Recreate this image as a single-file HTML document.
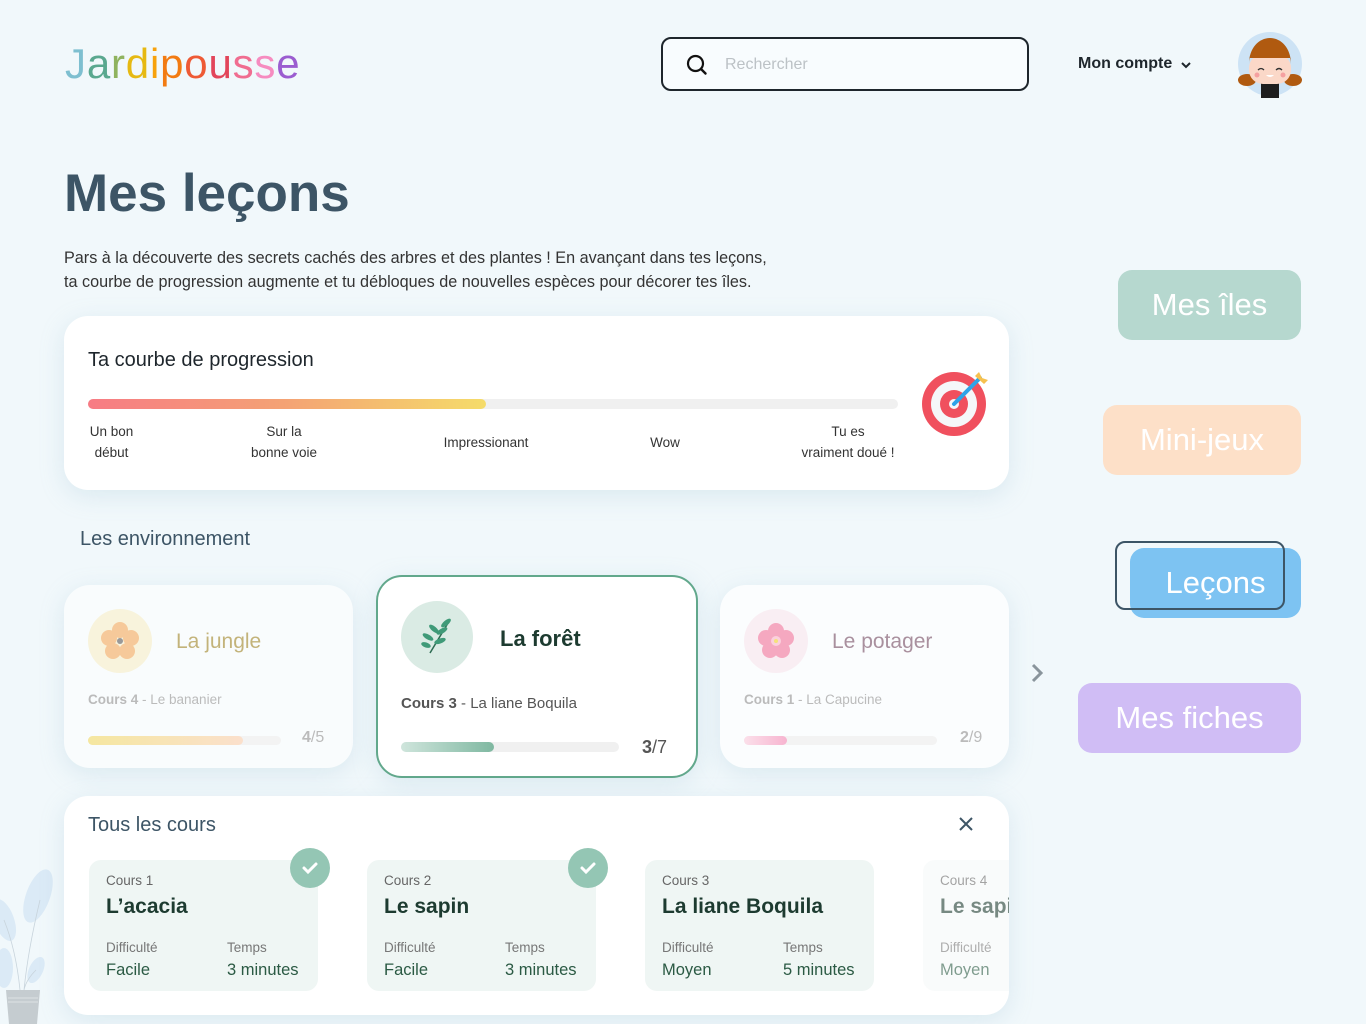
<!DOCTYPE html>
<html><head><meta charset="utf-8"><style>
*{box-sizing:border-box;margin:0;padding:0}
body{width:1366px;height:1024px;overflow:hidden;background:#f1f8fb;font-family:"Liberation Sans",sans-serif;position:relative;color:#2a3640}
.abs{position:absolute}
.logo{left:65px;top:40px;font-size:42px;font-weight:400;letter-spacing:0.8px}
.search{left:661px;top:37px;width:368px;height:54px;border:2px solid #1e262c;border-radius:10px;background:#f8fcfe}
.search span{position:absolute;left:62px;top:17px;font-size:16px;color:#bcc2c6}
.card{background:#fff;border-radius:24px;box-shadow:0 6px 24px rgba(150,190,210,0.25)}
.nav{color:#fff;font-size:31px;border-radius:14px;text-align:center;line-height:70px;height:70px}
.lab{font-size:13.5px;color:#333;text-align:center;line-height:21px}
.env{border-radius:26px;background:#fbfdfe}
.cc{background:#eff6f4;border-radius:12px;width:229px;height:131px}
.cc .n{position:absolute;left:17px;top:13px;font-size:13.5px;color:#666}
.cc .t{position:absolute;left:17px;top:35px;font-size:21px;color:#1d3b30;font-weight:600}
.cc .d{position:absolute;left:17px;top:80px;font-size:13.5px;color:#777}
.cc .dv{position:absolute;left:17px;top:101px;font-size:16.5px;color:#2b5a44}
.cc .tm{position:absolute;left:138px;top:80px;font-size:13.5px;color:#777}
.cc .tv{position:absolute;left:138px;top:101px;font-size:16.5px;color:#2b5a44}
.chk{width:40px;height:40px;border-radius:50%;background:#94c6b4}
</style></head><body>

<div class="abs logo"><span style="color:#7ebfd0">J</span><span style="color:#5aa88f">a</span><span style="color:#8fb35e">r</span><span style="color:#e6b912">d</span><span style="color:#f7a20c">i</span><span style="color:#f27b12">p</span><span style="color:#ee5a35">o</span><span style="color:#e2455a">u</span><span style="color:#f06d90">s</span><span style="color:#f68cc0">s</span><span style="color:#9b5dd0">e</span></div>

<div class="abs search"><svg class="abs" style="left:23px;top:15px" width="22" height="22" viewBox="0 0 22 22"><circle cx="9.5" cy="9.5" r="7.5" fill="none" stroke="#111" stroke-width="2.2"/><path d="M15 15l4.5 4.5" stroke="#111" stroke-width="2.4" stroke-linecap="round"/></svg><span>Rechercher</span></div>

<div class="abs" style="left:1078px;top:55px;font-size:16px;color:#1e262c;font-weight:600">Mon compte</div>
<svg class="abs" style="left:1180px;top:60px" width="12" height="10" viewBox="0 0 12 10"><path d="M2 3l4 4 4-4" stroke="#1e262c" stroke-width="2" fill="none"/></svg>

<svg class="abs" style="left:1237px;top:32px" width="66" height="66" viewBox="0 0 66 66"><circle cx="33" cy="32" r="32" fill="#cde3f5"/><ellipse cx="10" cy="48" rx="9" ry="6" fill="#b05a10"/><ellipse cx="56" cy="48" rx="9" ry="6" fill="#b05a10"/><rect x="24" y="50" width="18" height="16" fill="#1e1e1e"/><rect x="12" y="22" width="42" height="30" rx="14" fill="#fbd8c8"/><path d="M12 32C12 16 22 6 33 6S54 16 54 32L54 26H12z" fill="#b05a10"/><path d="M21 38q3-3 6 0M39 38q3-3 6 0" stroke="#333" stroke-width="1.3" fill="none"/><path d="M29 43q4 4 8 0z" fill="#fff"/><circle cx="20" cy="43" r="2.5" fill="#f5a0a0"/><circle cx="46" cy="43" r="2.5" fill="#f5a0a0"/></svg>

<div class="abs" style="left:64px;top:163px;font-size:53px;color:#3d5566;font-weight:600">Mes leçons</div>
<div class="abs" style="left:64px;top:246px;font-size:16.2px;color:#333;line-height:24px;width:800px">Pars à la découverte des secrets cachés des arbres et des plantes ! En avançant dans tes leçons,<br>ta courbe de progression augmente et tu débloques de nouvelles espèces pour décorer tes îles.</div>

<div class="abs card" style="left:64px;top:316px;width:945px;height:174px">
 <div class="abs" style="left:24px;top:33px;font-size:20px;color:#1e262c">Ta courbe de progression</div>
 <div class="abs" style="left:24px;top:83px;width:810px;height:10px;border-radius:5px;background:#f0f0f0"></div>
 <div class="abs" style="left:24px;top:83px;width:398px;height:10px;border-radius:5px;background:linear-gradient(90deg,#f77b84,#f4a374,#f5dc6a)"></div>
 <div class="abs lab" style="left:24px;top:105px;width:47px">Un bon<br>début</div>
 <div class="abs lab" style="left:180px;top:105px;width:80px">Sur la<br>bonne voie</div>
 <div class="abs lab" style="left:370px;top:116px;width:104px">Impressionant</div>
 <div class="abs lab" style="left:580px;top:116px;width:42px">Wow</div>
 <div class="abs lab" style="left:730px;top:105px;width:108px">Tu es<br>vraiment doué !</div>
 <svg class="abs" style="left:856px;top:54px" width="70" height="70" viewBox="0 0 70 70"><circle cx="34" cy="34" r="32" fill="#f0505e"/><circle cx="34" cy="34" r="23" fill="#f5f7f9"/><circle cx="34" cy="34" r="14" fill="#f0505e"/><circle cx="34" cy="34" r="5" fill="#f5f7f9"/><path d="M34 34L60 8" stroke="#2fa3e8" stroke-width="4" stroke-linecap="round"/><path d="M55 6l4-4 3 6 6 2-4 4z" fill="#f6c14f"/></svg>
</div>

<div class="abs" style="left:80px;top:528px;font-size:20px;color:#3d5566">Les environnement</div>

<div class="abs env card" style="left:64px;top:585px;width:289px;height:183px;background:#f9fcfd">
 <div class="abs" style="left:24px;top:24px;width:64px;height:64px;border-radius:50%;background:#f8f3dc"></div>
 <svg class="abs" style="left:36px;top:36px" width="40" height="40" viewBox="0 0 40 40"><g fill="#f6c99a"><circle cx="20" cy="9" r="8"/><circle cx="31" cy="17" r="8"/><circle cx="27" cy="30" r="8"/><circle cx="13" cy="30" r="8"/><circle cx="9" cy="17" r="8"/></g><circle cx="20" cy="20" r="3" fill="#999"/></svg>
 <div class="abs" style="left:112px;top:45px;font-size:21px;color:#c3b37a">La jungle</div>
 <div class="abs" style="left:24px;top:107px;font-size:13.5px;color:#bbb"><b>Cours 4</b> - Le bananier</div>
 <div class="abs" style="left:24px;top:151px;width:193px;height:9px;border-radius:5px;background:#f3f3f3"></div>
 <div class="abs" style="left:24px;top:151px;width:155px;height:9px;border-radius:5px;background:linear-gradient(90deg,#f5e7a0,#fbe0cc)"></div>
 <div class="abs" style="left:238px;top:144px;font-size:16px;color:#bbb"><b>4</b>/5</div>
</div>

<div class="abs card" style="left:376px;top:575px;width:322px;height:203px;border:2px solid #62a88c;border-radius:26px">
 <div class="abs" style="left:23px;top:24px;width:72px;height:72px;border-radius:50%;background:#daebe4"></div>
 <svg class="abs" style="left:38px;top:38px" width="44" height="44" viewBox="0 0 44 44"><path d="M14 38L32 8" stroke="#2d6b52" stroke-width="1.5"/><g fill="#3f9a78"><ellipse cx="30" cy="8" rx="6" ry="2.5" transform="rotate(-40 30 8)"/><ellipse cx="26" cy="16" rx="6" ry="2.5" transform="rotate(-30 26 16)"/><ellipse cx="18" cy="14" rx="6" ry="2.5" transform="rotate(40 18 14)"/><ellipse cx="12" cy="22" rx="6" ry="2.5" transform="rotate(30 12 22)"/><ellipse cx="24" cy="26" rx="6" ry="2.5" transform="rotate(-20 24 26)"/><ellipse cx="10" cy="30" rx="5" ry="2.5" transform="rotate(20 10 30)"/></g></svg>
 <div class="abs" style="left:122px;top:49px;font-size:22px;color:#1d3b30;font-weight:600">La forêt</div>
 <div class="abs" style="left:23px;top:118px;font-size:15px;color:#555"><b>Cours 3</b> - La liane Boquila</div>
 <div class="abs" style="left:23px;top:165px;width:218px;height:10px;border-radius:5px;background:#f0f0f0"></div>
 <div class="abs" style="left:23px;top:165px;width:93px;height:10px;border-radius:5px;background:linear-gradient(90deg,#cfe5dc,#7fb8a1)"></div>
 <div class="abs" style="left:264px;top:160px;font-size:18px;color:#555"><b>3</b>/7</div>
</div>

<div class="abs env card" style="left:720px;top:585px;width:289px;height:183px">
 <div class="abs" style="left:24px;top:24px;width:64px;height:64px;border-radius:50%;background:#f9eef3"></div>
 <svg class="abs" style="left:36px;top:36px" width="40" height="40" viewBox="0 0 40 40"><g fill="#f5a8c0"><circle cx="20" cy="10" r="8"/><circle cx="30" cy="17" r="8"/><circle cx="26" cy="29" r="8"/><circle cx="14" cy="29" r="8"/><circle cx="10" cy="17" r="8"/></g><circle cx="20" cy="20" r="5" fill="#fbd0dc"/><circle cx="20" cy="20" r="2" fill="#f5e27a"/></svg>
 <div class="abs" style="left:112px;top:45px;font-size:21px;color:#a9909e">Le potager</div>
 <div class="abs" style="left:24px;top:107px;font-size:13.5px;color:#bbb"><b>Cours 1</b> - La Capucine</div>
 <div class="abs" style="left:24px;top:151px;width:193px;height:9px;border-radius:5px;background:#f3f3f3"></div>
 <div class="abs" style="left:24px;top:151px;width:43px;height:9px;border-radius:5px;background:linear-gradient(90deg,#fbe0ea,#f7b4d0)"></div>
 <div class="abs" style="left:240px;top:144px;font-size:16px;color:#bbb"><b>2</b>/9</div>
</div>
<svg class="abs" style="left:1029px;top:662px" width="16" height="22" viewBox="0 0 16 22"><path d="M4 3l8 8-8 8" stroke="#8a959c" stroke-width="3" fill="none"/></svg>

<svg class="abs" style="left:0;top:860px" width="60" height="164" viewBox="0 0 60 164"><g fill="#dbeaf6"><ellipse cx="38" cy="36" rx="12" ry="28" transform="rotate(20 38 36)"/><ellipse cx="4" cy="60" rx="10" ry="22" transform="rotate(-20 4 60)"/><ellipse cx="4" cy="108" rx="9" ry="20"/><ellipse cx="36" cy="110" rx="7" ry="14" transform="rotate(25 36 110)"/></g><path d="M40 40Q28 90 24 130M4 60Q16 90 20 130M36 110Q26 120 24 130" stroke="#c8d4dc" stroke-width="0.8" fill="none"/><path d="M6 130h34l-3 34H9z" fill="#c5ccd0"/><path d="M8 138h30M8 142h30" stroke="#dde2e5" stroke-width="1"/></svg>

<div class="abs card" style="left:64px;top:796px;width:945px;height:219px;overflow:hidden">
 <div class="abs" style="left:24px;top:18px;font-size:20px;color:#3d5566">Tous les cours</div>
 <svg class="abs" style="left:894px;top:20px" width="16" height="16" viewBox="0 0 16 16"><path d="M2 2l12 12M14 2L2 14" stroke="#3d5566" stroke-width="2"/></svg>
 <div class="abs cc" style="left:25px;top:64px"><div class="n">Cours 1</div><div class="t">L’acacia</div><div class="d">Difficulté</div><div class="dv">Facile</div><div class="tm">Temps</div><div class="tv">3 minutes</div></div>
 <div class="abs cc" style="left:303px;top:64px"><div class="n">Cours 2</div><div class="t">Le sapin</div><div class="d">Difficulté</div><div class="dv">Facile</div><div class="tm">Temps</div><div class="tv">3 minutes</div></div>
 <div class="abs cc" style="left:581px;top:64px"><div class="n">Cours 3</div><div class="t">La liane Boquila</div><div class="d">Difficulté</div><div class="dv">Moyen</div><div class="tm">Temps</div><div class="tv">5 minutes</div></div>
 <div class="abs cc" style="left:859px;top:64px;background:#f6f8f8;opacity:.6"><div class="n">Cours 4</div><div class="t">Le sapin</div><div class="d">Difficulté</div><div class="dv">Moyen</div></div>
 <div class="abs chk" style="left:226px;top:52px"></div>
 <div class="abs chk" style="left:504px;top:52px"></div>
 <svg class="abs" style="left:236px;top:62px" width="20" height="20" viewBox="0 0 20 20"><path d="M4 10l4 4 8-8" stroke="#fff" stroke-width="3" fill="none" stroke-linecap="round"/></svg>
 <svg class="abs" style="left:514px;top:62px" width="20" height="20" viewBox="0 0 20 20"><path d="M4 10l4 4 8-8" stroke="#fff" stroke-width="3" fill="none" stroke-linecap="round"/></svg>
</div>

<div class="abs nav" style="left:1118px;top:270px;width:183px;background:#b6d8cf">Mes îles</div>
<div class="abs nav" style="left:1103px;top:405px;width:198px;background:#fde0c8">Mini-jeux</div>
<div class="abs nav" style="left:1130px;top:548px;width:171px;background:#7dc3f2">Leçons</div>
<div class="abs" style="left:1115px;top:541px;width:170px;height:69px;border:2px solid #3d5566;border-radius:10px"></div>
<div class="abs nav" style="left:1078px;top:683px;width:223px;background:#d0bdf5">Mes fiches</div>
</body></html>
